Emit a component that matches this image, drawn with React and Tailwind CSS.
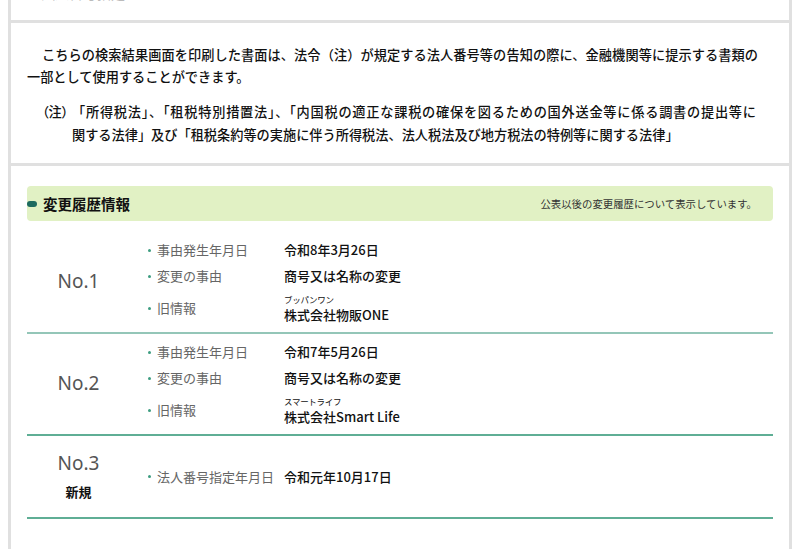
import React from "react";

const font = { fontFamily: '"Noto Sans CJK JP", "Noto Sans", sans-serif' };

function Item({ label, value, ruby }) {
  if (ruby) {
    return (
      <div className="flex items-center mt-[3px] h-[32px]">
        <span className="w-[9px] flex items-center">
          <span className="block w-[3px] h-[3px] rounded-full bg-[#3d9d80]" />
        </span>
        <span className="w-[127px] text-[13px] text-[#666]">{label}</span>
        <div className="flex flex-col">
          <span className="text-[8.5px] leading-[14px] text-[#111] tracking-[-0.3px]">{ruby}</span>
          <span className="text-[13px] leading-[18px] text-[#111] font-medium">{value}</span>
        </div>
      </div>
    );
  }
  return (
    <div className="flex items-center h-[26px]">
      <span className="w-[9px] flex items-center">
        <span className="block w-[3px] h-[3px] rounded-full bg-[#3d9d80]" />
      </span>
      <span className="w-[127px] text-[13px] text-[#666]">{label}</span>
      <span className="text-[13px] text-[#111] font-medium">{value}</span>
    </div>
  );
}

function NoCol({ n, sub }) {
  return (
    <div className="w-[103px] shrink-0 flex flex-col items-center">
      <span className="text-[19px] leading-[24px] text-[#555]" style={{ fontFamily: '"Noto Sans", "Noto Sans CJK JP", sans-serif' }}>
        {n}
      </span>
      {sub && <span className="mt-[7px] text-[13px] leading-[20px] font-bold text-[#111]">{sub}</span>}
    </div>
  );
}

export default function App() {
  return (
    <div className="w-[800px] h-[549px] bg-white overflow-hidden px-[8px]" style={font}>
      <div className="h-full border-x-[3px] border-[#e0e0e0] flex flex-col">
        <div className="h-[23px] border-b-[3px] border-[#e0e0e0] overflow-hidden shrink-0">
          <div className="pl-[30px] -mt-[16px] text-[14px] leading-[18px] text-[#bbb]">法人番号指定</div>
        </div>
        <div className="border-b-[3px] border-[#e0e0e0] pt-[21px] pb-[17px] pl-[16px] shrink-0 text-[13.2px] text-[#111] font-medium">
          <div className="leading-[22px] whitespace-nowrap">
            <div className="ml-[15px] w-[716px] text-justify [text-align-last:justify]">
              こちらの検索結果画面を印刷した書面は、法令（注）が規定する法人番号等の告知の際に、金融機関等に提示する書類の
            </div>
            <div>一部として使用することができます。</div>
          </div>
          <div className="mt-[12px] flex leading-[23px] whitespace-nowrap">
            <span className="ml-[15px] w-[30px] shrink-0 [font-feature-settings:'palt']">（注）</span>
            <div>
              <div className="w-[684px] text-justify [text-align-last:justify]">
                「所得税法」、「租税特別措置法」、「内国税の適正な課税の確保を図るための国外送金等に係る調書の提出等に
              </div>
              <div>関する法律」及び「租税条約等の実施に伴う所得税法、法人税法及び地方税法の特例等に関する法律」</div>
            </div>
          </div>
        </div>
        <div className="px-[16px] pt-[20px]">
          <div className="h-[35px] rounded-[4px] bg-[#e1f1c4] flex items-center">
            <span className="block w-[10px] h-[6px] rounded-full bg-[#1d6b5f]" />
            <span className="ml-[6px] text-[14.5px] font-bold text-[#111]">変更履歴情報</span>
            <span className="ml-auto mr-[16px] text-[10.4px] text-[#333]">公表以後の変更履歴について表示しています。</span>
          </div>
          <div className="mt-[11px]">
            <div className="flex items-center pt-[5px] pb-[8px] border-b-2 border-[#94c6b8]">
              <NoCol n="No.1" />
              <div className="ml-[18px]">
                <Item label="事由発生年月日" value="令和8年3月26日" />
                <Item label="変更の事由" value="商号又は名称の変更" />
                <Item label="旧情報" ruby="ブッパンワン" value="株式会社物販ONE" />
              </div>
            </div>
            <div className="flex items-center pt-[5px] pb-[8px] border-b-2 border-[#5fae95]">
              <NoCol n="No.2" />
              <div className="ml-[18px]">
                <Item label="事由発生年月日" value="令和7年5月26日" />
                <Item label="変更の事由" value="商号又は名称の変更" />
                <Item label="旧情報" ruby="スマートライフ" value="株式会社Smart Life" />
              </div>
            </div>
            <div className="flex items-center py-[15px] border-b-2 border-[#5fae95]">
              <NoCol n="No.3" sub="新規" />
              <div className="ml-[18px]">
                <Item label="法人番号指定年月日" value="令和元年10月17日" />
              </div>
            </div>
          </div>
        </div>
      </div>
    </div>
  );
}
